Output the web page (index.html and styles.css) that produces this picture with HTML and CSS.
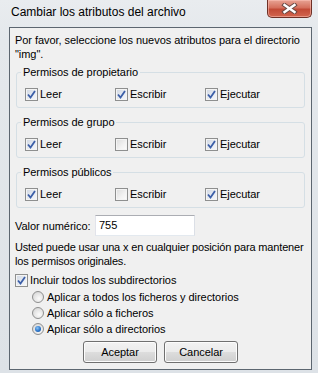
FILE: index.html
```html
<!DOCTYPE html>
<html lang="es">
<head>
<meta charset="utf-8">
<title>Cambiar los atributos del archivo</title>
<link rel="stylesheet" href="styles.css">
</head>
<body>
<div class="window">
  <div class="titlebar">
    <span class="title">Cambiar los atributos del archivo</span>
    <div class="close">
      <svg width="17" height="11" viewBox="0 0 17 11"><path d="M3.5 2 L13.5 9 M13.5 2 L3.5 9" stroke="#6a4a45" stroke-width="4.4" stroke-linecap="square" fill="none"/><path d="M3.5 2 L13.5 9 M13.5 2 L3.5 9" stroke="#ffffff" stroke-width="2.4" stroke-linecap="square" fill="none"/></svg>
    </div>
  </div>
  <div class="client">
    <p class="intro">Por favor, seleccione los nuevos atributos para el directorio "img".</p>

    <fieldset class="group">
      <legend>Permisos de propietario</legend>
      <div class="opts">
        <label class="opt"><span class="cb on"><svg width="9" height="9" viewBox="0 0 9 9"><path d="M1 4.5 L3.5 7.5 L8 1" stroke="#3b5ea8" stroke-width="1.8" fill="none"/></svg></span>Leer</label>
        <label class="opt"><span class="cb on"><svg width="9" height="9" viewBox="0 0 9 9"><path d="M1 4.5 L3.5 7.5 L8 1" stroke="#3b5ea8" stroke-width="1.8" fill="none"/></svg></span>Escribir</label>
        <label class="opt"><span class="cb on"><svg width="9" height="9" viewBox="0 0 9 9"><path d="M1 4.5 L3.5 7.5 L8 1" stroke="#3b5ea8" stroke-width="1.8" fill="none"/></svg></span>Ejecutar</label>
      </div>
    </fieldset>

    <fieldset class="group">
      <legend>Permisos de grupo</legend>
      <div class="opts">
        <label class="opt"><span class="cb on"><svg width="9" height="9" viewBox="0 0 9 9"><path d="M1 4.5 L3.5 7.5 L8 1" stroke="#3b5ea8" stroke-width="1.8" fill="none"/></svg></span>Leer</label>
        <label class="opt"><span class="cb"></span>Escribir</label>
        <label class="opt"><span class="cb on"><svg width="9" height="9" viewBox="0 0 9 9"><path d="M1 4.5 L3.5 7.5 L8 1" stroke="#3b5ea8" stroke-width="1.8" fill="none"/></svg></span>Ejecutar</label>
      </div>
    </fieldset>

    <fieldset class="group">
      <legend>Permisos públicos</legend>
      <div class="opts">
        <label class="opt"><span class="cb on"><svg width="9" height="9" viewBox="0 0 9 9"><path d="M1 4.5 L3.5 7.5 L8 1" stroke="#3b5ea8" stroke-width="1.8" fill="none"/></svg></span>Leer</label>
        <label class="opt"><span class="cb"></span>Escribir</label>
        <label class="opt"><span class="cb on"><svg width="9" height="9" viewBox="0 0 9 9"><path d="M1 4.5 L3.5 7.5 L8 1" stroke="#3b5ea8" stroke-width="1.8" fill="none"/></svg></span>Ejecutar</label>
      </div>
    </fieldset>

    <div class="numeric">
      <span class="numlabel">Valor numérico:</span>
      <span class="textbox">755</span>
    </div>

    <p class="hint">Usted puede usar una x en cualquier posición para mantener los permisos originales.</p>

    <label class="opt recurse"><span class="cb on"><svg width="9" height="9" viewBox="0 0 9 9"><path d="M1 4.5 L3.5 7.5 L8 1" stroke="#3b5ea8" stroke-width="1.8" fill="none"/></svg></span>Incluir todos los subdirectorios</label>

    <div class="radios">
      <label class="ropt"><span class="rb"></span>Aplicar a todos los ficheros y directorios</label>
      <label class="ropt"><span class="rb"></span>Aplicar sólo a ficheros</label>
      <label class="ropt"><span class="rb on"><span class="dot"></span></span>Aplicar sólo a directorios</label>
    </div>

    <div class="buttons">
      <span class="btn">Aceptar</span>
      <span class="btn">Cancelar</span>
    </div>
  </div>
</div>
</body>
</html>
```

FILE: styles.css
```css
html, body {
  margin: 0;
  padding: 0;
}

body {
  width: 318px;
  height: 373px;
  overflow: hidden;
  font-family: "Liberation Sans", Arial, sans-serif;
  font-size: 11px;
  letter-spacing: -0.05px;
  color: #000;
  background: #d9dee4;
}

.window {
  box-sizing: border-box;
  width: 318px;
  height: 373px;
  padding: 0 6px 3px 9px;
  display: flex;
  flex-direction: column;
  background:
    linear-gradient(to bottom, #e9ecef 0, #e4e8ec 40px, #dde2e7 100%);
}

.titlebar {
  height: 27px;
  flex: 0 0 27px;
  display: flex;
  align-items: flex-start;
}

.title {
  padding: 5px 0 0 2px;
  line-height: 14px;
  font-size: 12px;
  letter-spacing: 0;
  color: #000;
}

.close {
  margin-left: auto;
  box-sizing: border-box;
  width: 45px;
  height: 18px;
  border: 1px solid #6e3026;
  border-top: none;
  border-radius: 0 0 5px 5px;
  background: linear-gradient(to bottom, #e8a394 0, #d5705d 45%, #c24a36 55%, #d2664f 100%);
  box-shadow: inset 0 0 0 1px rgba(255, 200, 190, 0.5);
  display: flex;
  align-items: center;
  justify-content: center;
}

.close svg {
  display: block;
}

.client {
  flex: 1;
  box-sizing: border-box;
  border: 1px solid #5c6670;
  background: #f0f0f0;
  padding: 5px 2px 5px 5px;
  display: flex;
  flex-direction: column;
}

.intro {
  margin: 0;
  line-height: 14px;
}

.group {
  margin: 4px 4px 0 1px;
  padding: 8px 8px 6px 8px;
  border: 1px solid #d5dfe5;
  border-radius: 3px;
  min-width: 0;
}

.group + .group {
  margin-top: 7px;
}

.group legend {
  padding: 0 2px;
  margin-left: -4px;
  line-height: 14px;
}

.opts {
  display: grid;
  grid-template-columns: 90px 90px 90px;
}

.opt {
  display: flex;
  align-items: center;
  line-height: 14px;
  height: 14px;
  white-space: nowrap;
}

.cb {
  box-sizing: border-box;
  width: 13px;
  height: 13px;
  flex: 0 0 13px;
  margin-right: 2px;
  border: 1px solid #8e8f8f;
  background: linear-gradient(135deg, #dcdcdc 0, #f2f2f2 60%, #fdfdfd 100%);
  box-shadow: inset 0 0 0 1px #f4f4f4;
  display: flex;
  align-items: center;
  justify-content: center;
}

.cb.on {
  background: linear-gradient(135deg, #cfd6e2 0, #e9edf3 60%, #f6f8fb 100%);
}

.cb svg {
  display: block;
}

.numeric {
  margin-top: 7px;
  display: flex;
  align-items: center;
  height: 21px;
}

.numlabel {
  flex: 0 0 80px;
  line-height: 14px;
}

.textbox {
  box-sizing: border-box;
  width: 100px;
  height: 21px;
  border: 1px solid #abadb3;
  border-color: #abadb3 #dbdfe6 #e3e9ef #e2e3ea;
  background: #fff;
  padding: 0 3px;
  line-height: 19px;
}

.hint {
  margin: 4px 0 0 0;
  line-height: 14px;
  letter-spacing: -0.16px;
}

.recurse {
  margin-top: 5px;
}

.radios {
  margin-top: 2px;
  display: flex;
  flex-direction: column;
}

.ropt {
  display: flex;
  align-items: center;
  height: 16px;
  line-height: 14px;
  padding-left: 17px;
  white-space: nowrap;
}

.rb {
  box-sizing: border-box;
  width: 12px;
  height: 12px;
  flex: 0 0 12px;
  margin-right: 3px;
  border-radius: 50%;
  border: 1px solid #8e8f8f;
  background: radial-gradient(circle at 60% 65%, #fbfbfb 0, #e6e6e6 50%, #cfcfcf 100%);
  display: flex;
  align-items: center;
  justify-content: center;
}

.rb .dot {
  width: 6px;
  height: 6px;
  border-radius: 50%;
  background: radial-gradient(circle at 40% 35%, #8cc4f5 0, #2a74c9 55%, #174d93 100%);
}

.buttons {
  margin-top: 4px;
  margin-right: 3px;
  display: flex;
  justify-content: center;
  gap: 7px;
}

.btn {
  box-sizing: border-box;
  width: 74px;
  height: 22px;
  border: 1px solid #707070;
  border-radius: 3px;
  background: linear-gradient(to bottom, #f2f2f2 0, #ebebeb 50%, #dddddd 50%, #cfcfcf 100%);
  box-shadow: inset 0 0 0 1px #fcfcfc;
  text-align: center;
  line-height: 20px;
}
```
